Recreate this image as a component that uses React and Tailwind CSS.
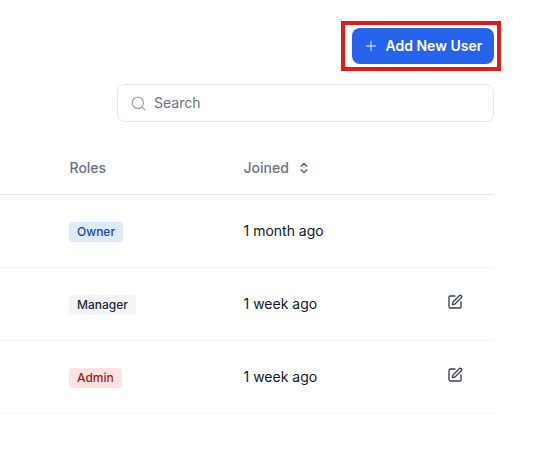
import React from 'react';
import { Plus, Search, ChevronsUpDown, SquarePen } from 'lucide-react';

const users = [
  { role: 'Owner', badge: 'bg-[#dbeafe] text-[#1e40af]', joined: '1 month ago', editable: false },
  { role: 'Manager', badge: 'bg-[#f3f4f6] text-[#1f2937]', joined: '1 week ago', editable: true },
  { role: 'Admin', badge: 'bg-[#fee2e2] text-[#991b1b]', joined: '1 week ago', editable: true },
];

export default function App() {
  return (
    <div className="w-[552px] h-[457px] overflow-hidden bg-white font-['Inter',sans-serif] pr-[58px] pt-[28px]">
      <div className="flex justify-end">
        <button className="relative flex items-center h-[36px] w-[142px] pl-[11px] rounded-lg bg-[#2563eb] text-white text-sm font-semibold">
          <Plus className="w-4 h-4 mr-[6px] opacity-90" strokeWidth={1.5} />
          <span className="ml-[0.5px]">Add New User</span>
          <span className="absolute -left-[11px] -right-[7px] -top-[7px] -bottom-[7px] border-4 border-[#e21a1a]"></span>
        </button>
      </div>

      <div className="flex justify-end mt-[20px]">
        <div className="flex items-center w-[377px] h-[38px] pl-[12px] rounded-lg border border-[#e5e7eb] text-[#6b7280]">
          <Search className="w-[17px] h-[17px] text-[#9ca3af]" strokeWidth={1.75} />
          <span className="ml-[7px] text-sm">Search</span>
        </div>
      </div>

      <div className="mt-[19px] flex items-center h-[54px] border-b border-[#e5e7eb] text-sm font-medium text-[#6b7280]">
        <div className="ml-[69.5px] w-[174px]">Roles</div>
        <div className="flex items-center">
          Joined
          <ChevronsUpDown className="ml-[8px] w-[14px] h-[14px] text-[#4b5563]" strokeWidth={2} />
        </div>
      </div>

      {users.map((user) => (
        <div key={user.role} className="flex items-center h-[73px] border-b border-[#f3f4f6]">
          <div className="ml-[69px] w-[174.5px] mb-[2px]">
            <span className={`inline-block px-[8px] py-[2px] rounded text-xs font-medium ${user.badge}`}>
              {user.role}
            </span>
          </div>
          <div className="w-[203.5px] text-sm text-[#111827]">{user.joined}</div>
          {user.editable && <SquarePen className="w-4 h-4 -mt-[5px] text-[#374151]" strokeWidth={2} />}
        </div>
      ))}
    </div>
  );
}
